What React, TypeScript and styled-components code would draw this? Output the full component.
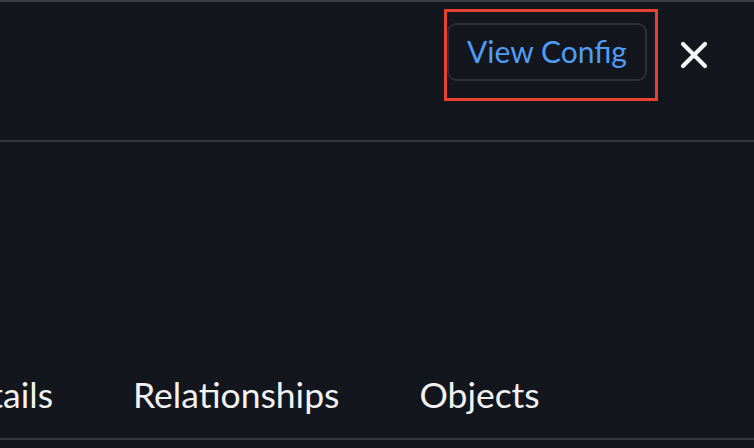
import React from "react";
import styled, { createGlobalStyle } from "styled-components";

const Global = createGlobalStyle`
  html, body { margin: 0; padding: 0; background: #13161c; }
  body { font-family: Lato, "Noto Sans", sans-serif; width: 754px; height: 448px; overflow: hidden; }
`;

const Page = styled.div`
  display: flex;
  flex-direction: column;
  width: 754px;
  height: 448px;
  background: #13161c;
  border-top: 2px solid #3a3c41;
  box-sizing: border-box;
`;

const Header = styled.header`
  display: flex;
  justify-content: flex-end;
  align-items: flex-start;
  height: 140px;
  box-sizing: border-box;
  padding: 7px 44px 0 0;
  border-bottom: 2px solid #34373c;
  gap: 20px;
`;

const Highlight = styled.div`
  display: flex;
  border: 3px solid #e8432e;
  padding: 11px 8px 17px 0;
`;

const ConfigButton = styled.button`
  width: 200px;
  height: 58px;
  box-sizing: border-box;
  border: 2px solid #2c2f34;
  border-radius: 9px;
  background: #13161c;
  color: #4f9df5;
  font-family: Lato, "Noto Sans", sans-serif;
  font-size: 30px;
  font-weight: 400;
  padding: 0 0 2px;
  cursor: pointer;
`;

const CloseButton = styled.button`
  display: flex;
  align-items: center;
  justify-content: center;
  width: 32px;
  height: 32px;
  margin-top: 30px;
  padding: 0;
  border: none;
  background: transparent;
  cursor: pointer;
`;

const Body = styled.main`
  flex: 1;
  display: flex;
  flex-direction: column;
  justify-content: flex-end;
`;

const TabBar = styled.nav`
  display: flex;
  align-items: center;
  height: 88px;
  box-sizing: border-box;
  border-bottom: 2px solid #34373c;
  margin-bottom: 8px;
  padding-bottom: 2px;
`;

const Track = styled.div`
  display: flex;
  gap: 80px;
  margin-left: -55px;
`;

const Tab = styled.div`
  color: #f2f2f2;
  font-family: Lato, "Noto Sans", sans-serif;
  font-size: 35.5px;
  font-weight: 400;
  white-space: nowrap;
`;

export default function App() {
  return (
    <>
      <Global />
      <Page>
        <Header>
          <Highlight>
            <ConfigButton>View Config</ConfigButton>
          </Highlight>
          <CloseButton aria-label="Close">
            <svg width="28" height="28" viewBox="0 0 28 28">
              <path d="M3 3 L25 25 M25 3 L3 25" stroke="#f5f5f5" strokeWidth="4.2" strokeLinecap="round" />
            </svg>
          </CloseButton>
        </Header>
        <Body>
          <TabBar>
            <Track>
              <Tab>Details</Tab>
              <Tab>Relationships</Tab>
              <Tab>Objects</Tab>
            </Track>
          </TabBar>
        </Body>
      </Page>
    </>
  );
}
